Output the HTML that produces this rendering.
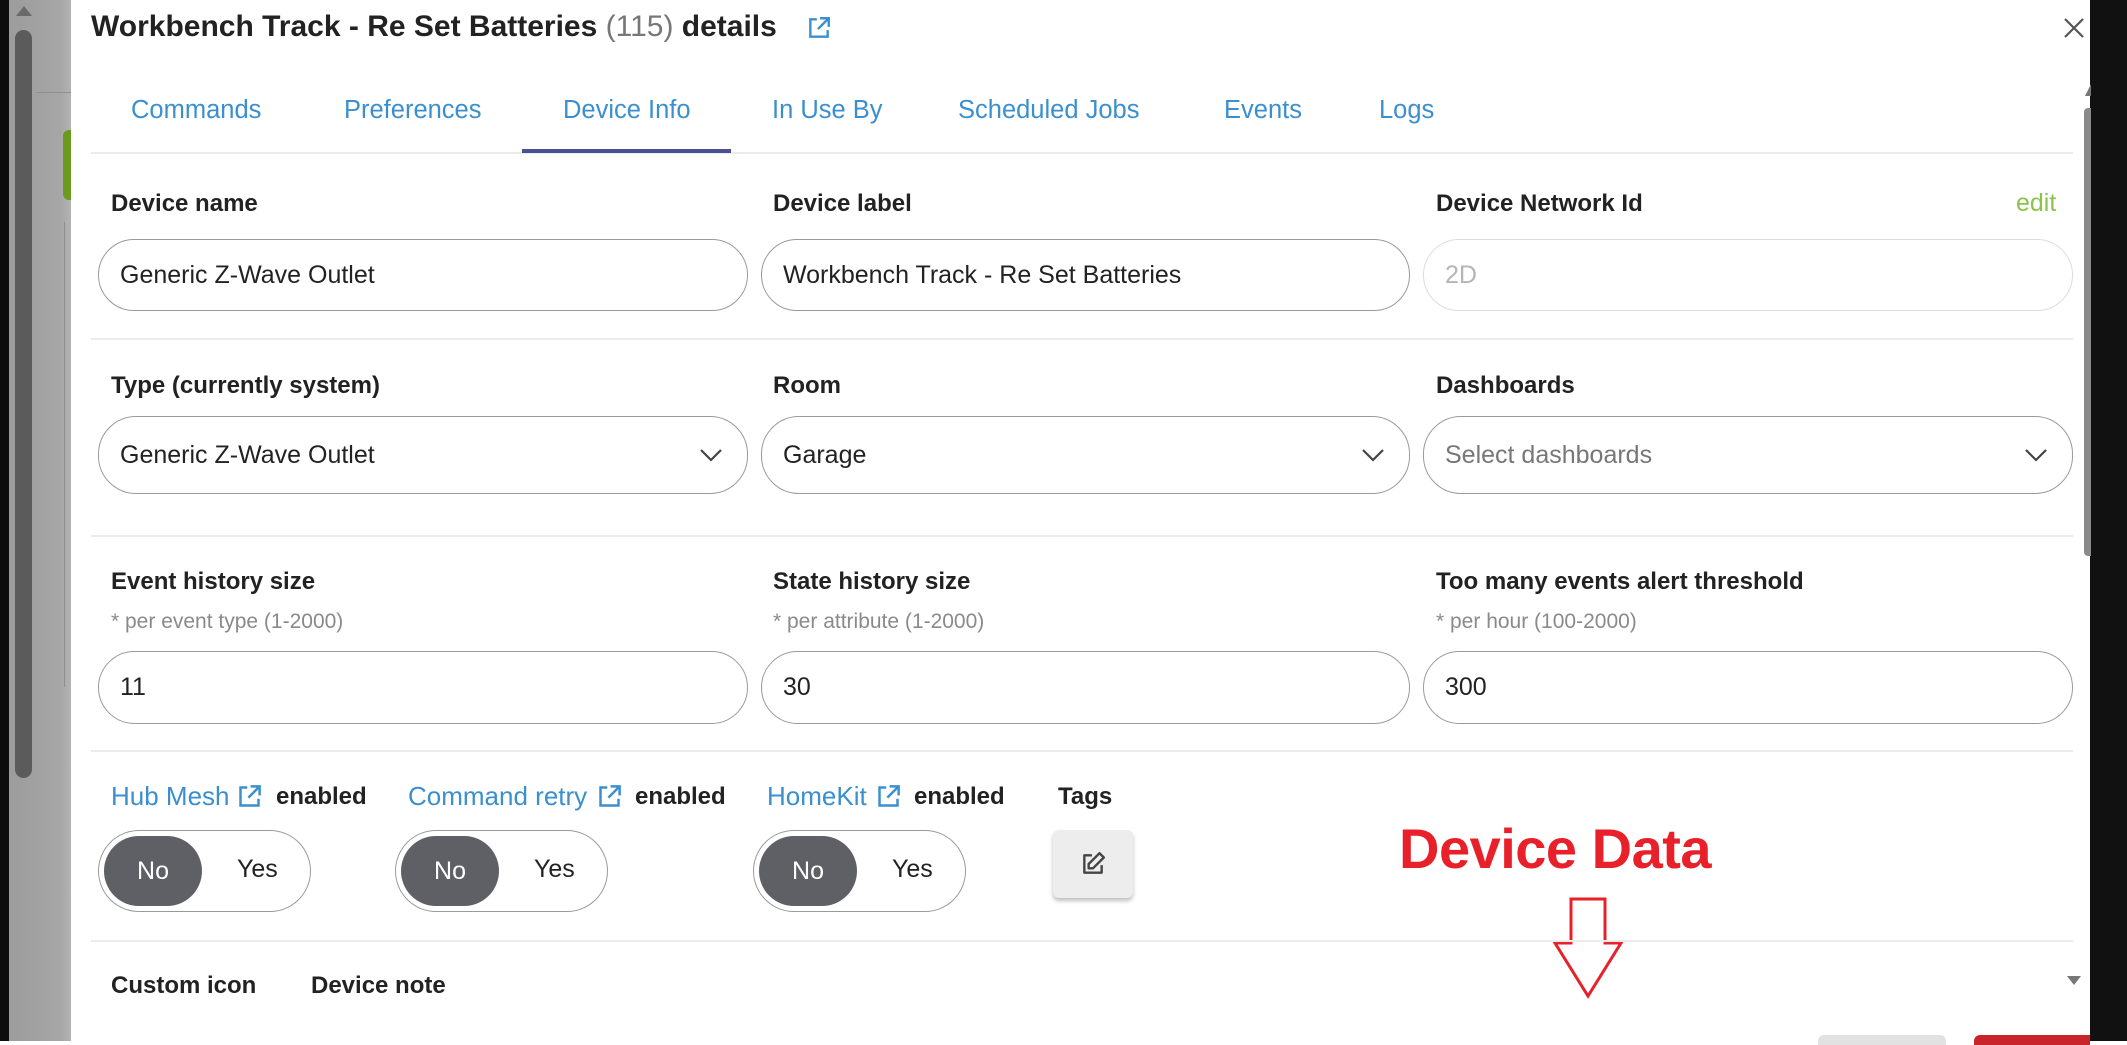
<!DOCTYPE html>
<html><head><meta charset="utf-8"><style>
*{margin:0;padding:0;box-sizing:border-box}
body{width:2127px;height:1041px;overflow:hidden;background:#fff;font-family:"Liberation Sans",sans-serif;position:relative;color:#222}
.a{position:absolute;white-space:nowrap}
.lbl{font-weight:bold;font-size:24px;color:#222}
.hint{font-size:21px;color:#8a8a8a}
.inp{position:absolute;border:1.5px solid #9a9a9a;border-radius:38px;background:#fff;font-size:25px;color:#222;padding-left:21px;display:flex;align-items:center}
.sep{position:absolute;left:91px;width:1982px;height:2px;background:#ebebeb}
.tab{position:absolute;top:96px;font-size:25.5px;color:#3b8fcf}
.chev{position:absolute;right:24px;top:50%;margin-top:-8px}
.tog{position:absolute;top:830px;width:213px;height:82px;border:1.5px solid #9a9a9a;border-radius:41px}
.tog .k{position:absolute;left:5px;top:5px;width:98px;height:70px;border-radius:35px;background:#5f5f66;color:#fff;font-size:25px;display:flex;align-items:center;justify-content:center}
.tog .y{position:absolute;left:138px;top:24px;font-size:25px;color:#222}
.blue{color:#3b8fcf;font-size:26px}
</style></head><body>
<!-- left strip -->
<div class="a" style="left:0;top:0;width:71px;height:1041px;background:linear-gradient(90deg,#0c0c0c 0,#0c0c0c 9px,#9c9c9c 9px,#a6a6a6 60px,#b3b3b3 71px)"></div>
<div class="a" style="left:15px;top:30px;width:17px;height:748px;border-radius:9px;background:#5b5b5b"></div>
<div class="a" style="left:16px;top:6px;width:0;height:0;border-left:8px solid transparent;border-right:8px solid transparent;border-bottom:10px solid #6a6a6a"></div>
<div class="a" style="left:63px;top:130px;width:8px;height:70px;background:#6a9a1e;border-radius:6px 0 0 6px"></div>
<div class="a" style="left:36px;top:92px;width:35px;height:1px;background:#8f8f8f"></div>
<div class="a" style="left:64px;top:222px;width:1px;height:465px;background:#8f8f8f"></div>
<!-- right strip -->
<div class="a" style="left:2090px;top:0;width:37px;height:1041px;background:#111"></div>
<div class="a" style="left:2084px;top:108px;width:7px;height:448px;background:#8a8a8a;border-radius:4px 0 0 4px"></div>
<div class="a" style="left:2085px;top:84px;width:0;height:0;border-left:6px solid transparent;border-bottom:12px solid #777"></div>
<div class="a" style="left:2067px;top:976px;width:0;height:0;border-left:7px solid transparent;border-right:7px solid transparent;border-top:9px solid #777"></div>

<!-- title -->
<div class="a" style="left:91px;top:10px;font-size:30px;font-weight:bold;color:#222">Workbench Track - Re Set Batteries <span style="color:#777;font-weight:normal">(115)</span> details</div>
<svg class="a" style="left:806px;top:15px" width="26" height="26" viewBox="0 0 24 24" fill="none" stroke="#3b8fcf" stroke-width="2.2"><path d="M10 4H4v16h16v-6"/><path d="M13 3h8v8M21 3L11 13"/></svg>
<svg class="a" style="left:2063px;top:17px" width="22" height="22" viewBox="0 0 22 22" stroke="#555" stroke-width="2.2"><path d="M2 2L20 20M20 2L2 20"/></svg>

<!-- tabs -->
<div class="tab" style="left:131px">Commands</div>
<div class="tab" style="left:344px">Preferences</div>
<div class="tab" style="left:563px">Device Info</div>
<div class="tab" style="left:772px">In Use By</div>
<div class="tab" style="left:958px">Scheduled Jobs</div>
<div class="tab" style="left:1224px">Events</div>
<div class="tab" style="left:1379px">Logs</div>
<div class="sep" style="top:152px"></div>
<div class="a" style="left:522px;top:149px;width:209px;height:4px;background:#4a5190"></div>

<!-- row1 -->
<div class="a lbl" style="left:111px;top:190px">Device name</div>
<div class="a lbl" style="left:773px;top:190px">Device label</div>
<div class="a lbl" style="left:1436px;top:190px">Device Network Id</div>
<div class="a" style="left:2016px;top:189px;font-size:25px;color:#8bc34a">edit</div>
<div class="inp" style="left:98px;top:239px;width:650px;height:72px">Generic Z-Wave Outlet</div>
<div class="inp" style="left:761px;top:239px;width:649px;height:72px">Workbench Track - Re Set Batteries</div>
<div class="inp" style="left:1423px;top:239px;width:650px;height:72px;border-color:#ddd;color:#b5b5b5">2D</div>
<div class="sep" style="top:338px"></div>

<!-- row2 -->
<div class="a lbl" style="left:111px;top:372px">Type (currently system)</div>
<div class="a lbl" style="left:773px;top:372px">Room</div>
<div class="a lbl" style="left:1436px;top:372px">Dashboards</div>
<div class="inp" style="left:98px;top:416px;width:650px;height:78px">Generic Z-Wave Outlet<svg class="chev" width="24" height="16" viewBox="0 0 24 16" fill="none" stroke="#444" stroke-width="2.2"><path d="M2 3l10 10 10-10"/></svg></div>
<div class="inp" style="left:761px;top:416px;width:649px;height:78px">Garage<svg class="chev" width="24" height="16" viewBox="0 0 24 16" fill="none" stroke="#444" stroke-width="2.2"><path d="M2 3l10 10 10-10"/></svg></div>
<div class="inp" style="left:1423px;top:416px;width:650px;height:78px;color:#777">Select dashboards<svg class="chev" width="24" height="16" viewBox="0 0 24 16" fill="none" stroke="#444" stroke-width="2.2"><path d="M2 3l10 10 10-10"/></svg></div>
<div class="sep" style="top:535px"></div>

<!-- row3 -->
<div class="a lbl" style="left:111px;top:568px">Event history size</div>
<div class="a lbl" style="left:773px;top:568px">State history size</div>
<div class="a lbl" style="left:1436px;top:568px">Too many events alert threshold</div>
<div class="a hint" style="left:111px;top:610px">* per event type (1-2000)</div>
<div class="a hint" style="left:773px;top:610px">* per attribute (1-2000)</div>
<div class="a hint" style="left:1436px;top:610px">* per hour (100-2000)</div>
<div class="inp" style="left:98px;top:651px;width:650px;height:73px">11</div>
<div class="inp" style="left:761px;top:651px;width:649px;height:73px">30</div>
<div class="inp" style="left:1423px;top:651px;width:650px;height:73px">300</div>
<div class="sep" style="top:750px"></div>

<!-- row4 -->
<div class="a blue" style="left:111px;top:781px">Hub Mesh</div>
<svg class="a" style="left:236px;top:783px" width="27" height="27" viewBox="0 0 24 24" fill="none" stroke="#3b8fcf" stroke-width="2.2"><path d="M10 4H4v16h16v-6"/><path d="M13 3h8v8M21 3L11 13"/></svg>
<div class="a lbl" style="left:276px;top:783px">enabled</div>
<div class="a blue" style="left:408px;top:781px">Command retry</div>
<svg class="a" style="left:596px;top:783px" width="27" height="27" viewBox="0 0 24 24" fill="none" stroke="#3b8fcf" stroke-width="2.2"><path d="M10 4H4v16h16v-6"/><path d="M13 3h8v8M21 3L11 13"/></svg>
<div class="a lbl" style="left:635px;top:783px">enabled</div>
<div class="a blue" style="left:767px;top:781px">HomeKit</div>
<svg class="a" style="left:875px;top:783px" width="27" height="27" viewBox="0 0 24 24" fill="none" stroke="#3b8fcf" stroke-width="2.2"><path d="M10 4H4v16h16v-6"/><path d="M13 3h8v8M21 3L11 13"/></svg>
<div class="a lbl" style="left:914px;top:783px">enabled</div>
<div class="a lbl" style="left:1058px;top:783px">Tags</div>

<div class="tog" style="left:98px"><div class="k">No</div><div class="y">Yes</div></div>
<div class="tog" style="left:395px"><div class="k">No</div><div class="y">Yes</div></div>
<div class="tog" style="left:753px"><div class="k">No</div><div class="y">Yes</div></div>
<div class="a" style="left:1053px;top:830px;width:80px;height:68px;background:#ededed;border-radius:6px;box-shadow:0 3px 4px rgba(0,0,0,.25)"></div>
<svg class="a" style="left:1080px;top:851px" width="26" height="26" viewBox="0 0 24 24" fill="none" stroke="#444" stroke-width="2.2" stroke-linejoin="round"><path d="M11 4H4v16h16v-7"/><path d="M18 2l4 4-10 10H8v-4z"/></svg>

<!-- annotation -->
<div class="a" style="left:1399px;top:816px;font-size:56px;font-weight:bold;color:#e8202a;letter-spacing:-0.5px">Device Data</div>
<svg class="a" style="left:1550px;top:896px" width="76" height="104" viewBox="0 0 76 104" fill="none" stroke="#e8202a" stroke-width="3"><path d="M21 3H55V47H71L38 100L5 47H21Z"/></svg>

<div class="sep" style="top:940px"></div>
<div class="a lbl" style="left:111px;top:972px">Custom icon</div>
<div class="a lbl" style="left:311px;top:972px">Device note</div>
<div class="a" style="left:1818px;top:1035px;width:128px;height:10px;background:#e2e2e2;border-radius:6px 6px 0 0"></div>
<div class="a" style="left:1974px;top:1035px;width:116px;height:10px;background:#c9232b;border-radius:6px 0 0 0"></div>
</body></html>
